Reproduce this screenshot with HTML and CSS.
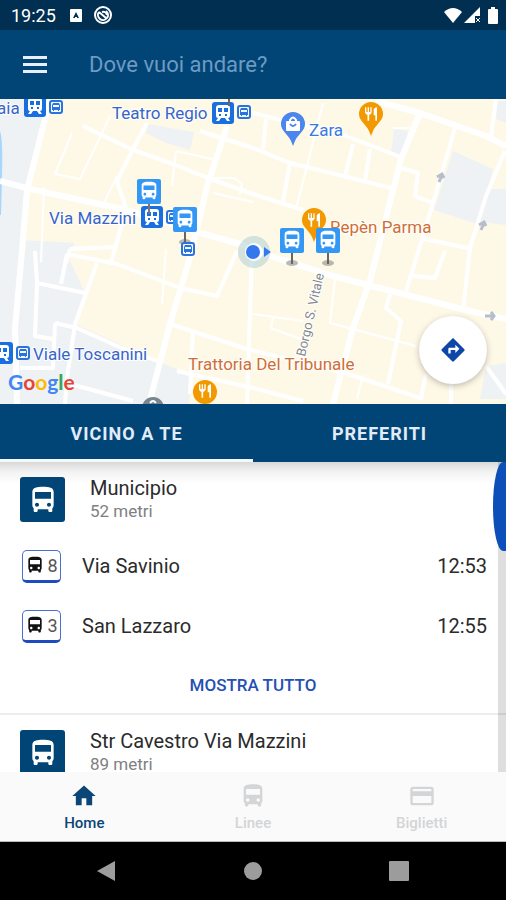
FILE: index.html
```
<!DOCTYPE html>
<html lang="it">
<head>
    <meta charset="UTF-8">
    <meta name="viewport" content="width=device-width, initial-scale=1.0">
    <title>Vicino a te</title>
    <link rel="stylesheet" href="styles.css">
</head>
<body>
    <!-- Shared icons -->
    <svg class="sprite" aria-hidden="true">
        <symbol id="bus" viewBox="0 0 24 24">
            <path fill="currentColor" d="M4 16c0 .88.39 1.67 1 2.22V20c0 .55.45 1 1 1h1c.55 0 1-.45 1-1v-1h8v1c0 .55.45 1 1 1h1c.55 0 1-.45 1-1v-1.78c.61-.55 1-1.34 1-2.22V6c0-3.5-3.58-4-8-4s-8 .5-8 4v10zm3.5 1c-.83 0-1.5-.67-1.5-1.5S6.67 14 7.5 14s1.5.67 1.5 1.5S8.33 17 7.5 17zm9 0c-.83 0-1.5-.67-1.5-1.5s.67-1.5 1.5-1.5 1.5.67 1.5 1.5-.67 1.5-1.5 1.5zm1.5-6H6V6h12v5z"/>
        </symbol>
        <symbol id="fork" viewBox="0 0 24 24">
            <path fill="#fff" d="M11 9H9V2H7v7H5V2H3v7c0 2.12 1.66 3.84 3.75 3.97V22h2.5v-9.03C11.34 12.84 13 11.12 13 9V2h-2v7zm5-3v8h2.5v8H21V2c-2.76 0-5 2.24-5 4z"/>
        </symbol>
        <symbol id="station" viewBox="0 0 24 24">
            <rect x="1" y="1" width="22" height="22" rx="3" fill="#1a6fe0"/>
            <path fill="#fff" fill-rule="evenodd" d="M8 4h8q3 0 3 3v8q0 2-2 2l2 3h-3l-2-3h-4l-2 3H5l2-3q-2 0-2-2V7q0-3 3-3zM7 7v4h4V7zm6 0v4h4V7zM8 13v2h2v-2zm6 0v2h2v-2z"/>
        </symbol>
        <symbol id="halt" viewBox="0 0 14 14">
            <rect x="1" y="1" width="12" height="12" rx="2" fill="#f4f9ff" stroke="#2a73dd" stroke-width="2"/>
            <path fill="#2a73dd" fill-rule="evenodd" d="M4 3h6l1 2v5h-1v1H9v-1H5v1H4v-1H3V5zm0 2v2h6V5z"/>
        </symbol>
        <symbol id="busstop" viewBox="0 0 26 40">
            <ellipse cx="13" cy="35" rx="6" ry="3" fill="#8a8a80" opacity=".6"/>
            <path d="M13 25v11" stroke="#666" stroke-width="2"/>
            <rect x="1" width="24" height="25" rx="2" fill="#3397f5"/>
            <use href="#bus" x="2" y="1" width="22" height="22" color="#fff"/>
        </symbol>
        <symbol id="pin" viewBox="0 0 24 34">
            <path fill="currentColor" d="M12 0a12 12 0 0 0-12 12c0 7 7 10 10 17l2 5 2-5c3-7 10-10 10-17A12 12 0 0 0 12 0z"/>
        </symbol>
    </svg>

    <div class="app">
        <div class="status-bar">
            <span class="clock">19:25</span>
            <svg width="12" height="13" viewBox="0 0 12 13"><rect width="12" height="13" rx="1" fill="#fff"/><path d="M3 9l3-6 3 6H7V8H5v1z" fill="#002f52"/></svg>
            <svg width="18" height="18" viewBox="0 0 18 18" fill="none" stroke="#fff" stroke-width="2"><circle cx="9" cy="9" r="8"/><path d="M5 6a5 5 0 1 0 7-1M5 6l7 6M8 6q4-1 5 3"/></svg>
            <div class="signals">
                <svg width="18" height="15" viewBox="0 0 18 15"><path d="M0 4Q9-4 18 4L9 15z" fill="#fff"/></svg>
                <svg width="16" height="16" viewBox="0 0 16 16"><path d="M0 16L16 0v9h-5v7z" fill="#fff"/><path d="M12 11l4 4m0-4l-4 4" stroke="#fff" stroke-width="1"/></svg>
                <svg class="battery" width="10" height="17" viewBox="0 0 10 17"><path d="M3 0h4v2h2q1 0 1 1v13q0 1-1 1H1q-1 0-1-1V3q0-1 1-1h2z" fill="#fff"/></svg>
            </div>
        </div>

        <header>
            <button class="menu-btn" aria-label="Menu"><span></span><span></span><span></span></button>
            <input type="text" class="search" placeholder="Dove vuoi andare?" aria-label="Dove vuoi andare?">
        </header>

        <div class="map">
            <svg class="map-canvas" viewBox="0 0 506 305">
                <rect width="506" height="305" fill="#fef9e7"/>
                <!-- Built-up areas and water -->
                <g fill="#eff2f4">
                    <path d="M0 0h50L27 91l-5 50 53 3-8 11 18 39-10 31 82 37 34 14-2 29H0z"/>
                    <path d="M148 25l46 8-4 18-24-7-20-10z"/>
                    <path d="M453 52l40 18-7 27-9 28-43-14z"/>
                    <path d="M490 90h16v36l-26-3z"/>
                    <path d="M394 30l14 2-5 27-12-5z"/>
                    <path d="M486 267l20-3v36h-26z"/>
                    <path d="M497 2h9v22l-10-4z"/>
                </g>
                <path d="M0 32q3 8 2 44l-1 40H0z" fill="#a9d5fb"/>

                <g class="roads">
                    <path class="wide" d="M50 0L27 91l-5 61-7 77 2 76"/>
                    <path class="wide" d="M0 82l30 8 97 21 73 23 40 11 30 12 63 20 70 18 67 17 36 8"/>
                    <path d="M83 27l50 24 40 14 35 14 45 16 50 16"/>
                    <path d="M147 24l-14 26-16 32 9 27-11 41-4 13"/>
                    <path class="wide" d="M227 27l-20 60-10 43-9 35-18 60-20 76"/>
                    <path d="M200 32l53 17 37 15 53 13 48 12"/>
                    <path d="M253 14l93 23 57 22"/>
                    <path class="wide" d="M376 2l44 12 66 23 20 10"/>
                    <path class="wide" d="M420 14l-19 46-23 90-8 32-17 47-20 76"/>
                    <path d="M496 0l-5 37"/>
                    <path d="M455 29l-22 75-13 43-14 45"/>
                    <path d="M505 52l-19 45-16 52-7 63"/>
                    <path d="M401 69l17 5-3 23 18 7"/>
                    <path d="M266 20l-3 30m27 14l-7 38m70-57l-8 32m25-27l-5 32"/>
                    <path d="M420 139l52 11m-59 27l22 2 10-27m-55 43l-4 14 15 13-13 63"/>
                    <path d="M170 225l77 25 98 24 78 26"/>
                    <path d="M67 155l50 10 63 24 37 8 20-45m-170 3l-6 30"/>
                    <path d="M35 152l2 32 48 10m12-30L75 225l-8 54-2 26"/>
                    <path d="M37 184l-2 53 18 3m2-16l22 5 40 18 40 15M55 224l-2 45H20"/>
                    <path d="M70 285l63 17m60-70l-3 63m-13-23l76 17 50 13"/>
                    <path d="M252 152l-5 153m204-20v20m-25-30l-5 24m65-32l20 28"/>
                    <path d="M70 150l45-2m-45 2l-4 14"/>
                </g>
                <g class="roads thin">
                    <path d="M110 17L80 80l-25-5 17-41m-28 54l-3 75m62-57l14-29m59-25l36 8m-36-8l-4 35m37-8h25l8 6-2 10"/>
                    <path d="M213 94l40 9m70-99l-27 106M393 29h17m-75 151l-5 44 86 23"/>
                    <path d="M253 215l50 7m-30-5l-2 12 32 12m60 35l-6 24m-195-95l4-55"/>
                </g>

                <!-- One-way arrows -->
                <g fill="none" stroke="#b7bdcc" stroke-width="3">
                    <path d="M439 83l3-7m-5 2l5-3 2 4M481 131l3-7m-5 2l5-3 2 4M485 217h9m-3-4l3 4-3 4"/>
                </g>

                <!-- Street and place names -->
                <g class="labels">
                    <text class="street" transform="translate(305 258) rotate(-77)">Borgo S. Vitale</text>
                    <text class="transit" x="-3" y="15">aia</text>
                    <text class="transit" x="112" y="20">Teatro Regio</text>
                    <text class="transit" x="49" y="125">Via Mazzini</text>
                    <text class="transit" x="33" y="261">Viale Toscanini</text>
                    <text class="shop" x="309" y="37">Zara</text>
                    <text class="food" x="330" y="134">Repèn Parma</text>
                    <text class="food" x="188" y="271">Trattoria Del Tribunale</text>
                </g>

                <use href="#station" x="23" y="-5" width="24" height="24"/>
                <use href="#halt" x="49" y="1" width="14" height="14"/>
                <use href="#station" x="211" y="2" width="24" height="24"/>
                <use href="#halt" x="237" y="6" width="14" height="14"/>
                <use href="#halt" x="166" y="111" width="14" height="14"/>
                <use href="#station" x="-10" y="242" width="24" height="24"/>
                <use href="#halt" x="16" y="247" width="14" height="14"/>
                <path d="M229 0v7" stroke="#666" stroke-width="2"/>

                <use href="#pin" x="281" y="13" width="24" height="34" color="#4a86ee"/>
                <rect x="286" y="22" width="14" height="10" rx="1" fill="#fff"/>
                <path d="M290 23v-2q3-5 6 0v2" fill="none" stroke="#fff" stroke-width="2"/>
                <path d="M290 25q3 4 6 0" fill="none" stroke="#4a86ee" stroke-width="2"/>
                <use href="#pin" x="359" y="3" width="24" height="34" color="#f29900"/>
                <use href="#fork" x="363" y="7" width="16" height="16"/>
                <use href="#pin" x="302" y="109" width="24" height="34" color="#f29900"/>
                <use href="#fork" x="306" y="113" width="16" height="16"/>
                <circle cx="205" cy="293" r="12" fill="#f29900"/>
                <use href="#fork" x="197" y="284" width="16" height="16"/>
                <circle cx="153" cy="309" r="11" fill="#78868e"/>
                <path d="M150 304q3-4 6 0" fill="none" stroke="#fff" stroke-width="2"/>

                <!-- Current position -->
                <circle cx="254" cy="153" r="16" fill="#a9cbd6" opacity=".5"/>
                <circle cx="254" cy="153" r="9" fill="#fff"/>
                <circle cx="253" cy="153" r="7" fill="#3478ee"/>
                <path d="M264 148l7 5-7 5z" fill="#3478ee"/>

                <use href="#busstop" x="136" y="80" width="26" height="40"/>
                <use href="#station" x="140" y="106" width="24" height="24"/>
                <path d="M149 105v10" stroke="#777" stroke-width="2"/>
                <use href="#busstop" x="172" y="108" width="26" height="40"/>
                <use href="#halt" x="181" y="143" width="14" height="14"/>
                <use href="#busstop" x="279" y="129" width="26" height="40"/>
                <use href="#busstop" x="315" y="129" width="26" height="40"/>

                <text class="brand" x="8" y="291"><tspan fill="#4285f4">G</tspan><tspan fill="#ea4335">o</tspan><tspan fill="#fbbc05">o</tspan><tspan fill="#4285f4">g</tspan><tspan fill="#34a853">l</tspan><tspan fill="#ea4335">e</tspan></text>
            </svg>
            <button class="route-btn" aria-label="Indicazioni">
                <svg width="28" height="28" viewBox="0 0 24 24"><path fill="#0d47a8" d="M21.71 11.29l-9-9c-.39-.39-1.02-.39-1.41 0l-9 9c-.39.39-.39 1.02 0 1.41l9 9c.39.39 1.02.39 1.41 0l9-9c.39-.38.39-1.01 0-1.41zM14 14.5V12h-4v3H8v-4c0-.55.45-1 1-1h5V7.5l3.5 3.5-3.5 3.5z"/></svg>
            </button>
        </div>

        <div class="tabs">
            <button class="tab active">VICINO A TE</button>
            <button class="tab">PREFERITI</button>
        </div>

        <main>
            <div class="stops">
                <section class="stop">
                    <div class="stop-head">
                        <div class="stop-icon"><svg width="32" height="32"><use href="#bus"/></svg></div>
                        <div>
                            <h2>Municipio</h2>
                            <p>52 metri</p>
                        </div>
                    </div>
                    <div class="line">
                        <span class="line-badge"><svg width="20" height="20"><use href="#bus"/></svg>8</span>
                        <span class="line-name">Via Savinio</span>
                        <span class="line-time">12:53</span>
                    </div>
                    <div class="line">
                        <span class="line-badge"><svg width="20" height="20"><use href="#bus"/></svg>3</span>
                        <span class="line-name">San Lazzaro</span>
                        <span class="line-time">12:55</span>
                    </div>
                    <button class="show-all">MOSTRA TUTTO</button>
                </section>
                <section class="stop">
                    <div class="stop-head">
                        <div class="stop-icon"><svg width="32" height="32"><use href="#bus"/></svg></div>
                        <div>
                            <h2>Str Cavestro Via Mazzini</h2>
                            <p>89 metri</p>
                        </div>
                    </div>
                </section>
            </div>
            <div class="track"><div class="thumb"></div></div>
        </main>

        <nav class="bottom-nav">
            <a href="#home" class="active">
                <svg width="28" height="28" viewBox="0 0 24 24"><path fill="currentColor" d="M10 20v-6h4v6h5v-8h3L12 3 2 12h3v8z"/></svg>
                Home
            </a>
            <a href="#linee">
                <svg width="28" height="28"><use href="#bus"/></svg>
                Linee
            </a>
            <a href="#biglietti">
                <svg width="28" height="28" viewBox="0 0 24 24"><path fill="currentColor" d="M20 4H4c-1.11 0-1.99.89-1.99 2L2 18c0 1.11.89 2 2 2h16c1.11 0 2-.89 2-2V6c0-1.11-.89-2-2-2zm0 14H4v-6h16v6zm0-10H4V6h16v2z"/></svg>
                Biglietti
            </a>
        </nav>

        <div class="system-nav">
            <button aria-label="Indietro"><svg width="20" height="20" viewBox="0 0 20 20"><path d="M18 0v20L0 10z" fill="#9c9c9c"/></svg></button>
            <button aria-label="Schermata iniziale"><svg width="20" height="20" viewBox="0 0 20 20"><circle cx="10" cy="10" r="9" fill="#9c9c9c"/></svg></button>
            <button aria-label="Recenti"><svg width="20" height="20" viewBox="0 0 20 20"><rect width="20" height="20" rx="1" fill="#9c9c9c"/></svg></button>
        </div>
    </div>
</body>
</html>
```
FILE: styles.css
```
* { margin: 0; padding: 0; box-sizing: border-box; }
body {
    font-family: Roboto, 'Liberation Sans', sans-serif;
    color: #2b2b2b;
    background-color: #fff;
}
button {
    font-family: inherit;
    border: none;
    background: none;
    cursor: pointer;
}
svg { display: block; flex-shrink: 0; }
.sprite { position: absolute; width: 0; height: 0; }
.app {
    display: flex;
    flex-direction: column;
    height: 100vh;
}

/* Status bar */
.status-bar {
    display: flex;
    align-items: center;
    gap: 12px;
    height: 30px;
    padding: 0 8px 0 11px;
    background-color: #002f52;
    color: #fff;
    flex-shrink: 0;
}
.clock {
    font-size: 18px;
    margin-right: 2px;
}
.signals {
    display: flex;
    align-items: center;
    gap: 2px;
    margin-left: auto;
}
.battery { margin-left: 6px; }

/* Search header */
header {
    display: flex;
    align-items: center;
    gap: 39px;
    height: 69px;
    padding: 0 20px;
    background-color: #004576;
    flex-shrink: 0;
}
.menu-btn {
    display: flex;
    flex-direction: column;
    gap: 4px;
    padding: 4px 3px;
}
.menu-btn span {
    width: 24px;
    height: 3px;
    background-color: #e6effa;
}
.search {
    flex: 1;
    min-width: 0;
    border: none;
    outline: none;
    background: none;
    color: #fff;
    font-family: inherit;
    font-size: 22px;
}
.search::placeholder { color: #6d9bc3; }

/* Map */
.map {
    position: relative;
    flex-shrink: 0;
}
.map-canvas { width: 100%; height: auto; }
.roads path {
    fill: none;
    stroke: #fff;
    stroke-width: 4px;
    stroke-linejoin: round;
}
.roads .wide { stroke-width: 6px; }
.thin path { stroke-width: 2px; }
.labels text {
    font-size: 17px;
    stroke: #fff;
    stroke-width: 2px;
    paint-order: stroke;
}
.labels .transit { fill: #3765c8; }
.labels .shop { fill: #3b7be0; }
.labels .food { fill: #cf6e36; }
.labels .street { fill: #84888c; font-size: 13px; }
.brand {
    font-family: Lato, sans-serif;
    font-size: 21px;
    font-weight: bold;
}
.route-btn {
    position: absolute;
    right: 19px;
    bottom: 20px;
    display: flex;
    align-items: center;
    justify-content: center;
    width: 68px;
    height: 68px;
    border-radius: 50%;
    background-color: #fff;
    box-shadow: 0 2px 6px rgba(0, 0, 0, 0.25);
}

/* Tabs */
.tabs {
    display: flex;
    flex-shrink: 0;
    background-color: #004576;
}
.tab {
    flex: 1;
    height: 58px;
    border-bottom: 3px solid transparent;
    border-top: 3px solid transparent;
    color: #e2ecf8;
    font-size: 18px;
    font-weight: 700;
    letter-spacing: 1px;
}
.tab.active { border-bottom-color: #f5f8fc; }

/* Stops list */
main {
    position: relative;
    flex: 1;
    min-height: 0;
    background: linear-gradient(#d8d8d8, #f3f3f3 10px, #fff 22px);
}
.stops {
    height: 100%;
    overflow: hidden;
}
.stop { border-bottom: 2px solid #ececec; }
.stop-head {
    display: flex;
    gap: 25px;
    padding: 15px 20px 14px;
}
.stop-icon {
    display: flex;
    align-items: center;
    justify-content: center;
    width: 45px;
    height: 45px;
    border-radius: 3px;
    background-color: #004576;
    color: #fff;
}
.stop-head h2 {
    font-size: 20px;
    font-weight: 400;
    line-height: 23px;
}
.stop-head p {
    font-size: 17px;
    line-height: 22px;
    color: #808080;
}
.line {
    display: flex;
    align-items: center;
    height: 60px;
    padding: 0 19px 0 22px;
    font-size: 20px;
}
.line-badge {
    display: flex;
    align-items: center;
    justify-content: center;
    gap: 2px;
    width: 39px;
    height: 33px;
    border: 1px solid #4a6fd0;
    border-bottom: 3px solid #1f4bc0;
    border-radius: 5px;
    font-size: 18px;
    color: #555;
}
.line-badge svg { color: #111; }
.line-name { margin-left: 21px; }
.line-time { margin-left: auto; }
.show-all {
    display: block;
    width: 100%;
    height: 57px;
    color: #2450b4;
    font-size: 17px;
    font-weight: 500;
}
.track {
    position: absolute;
    top: 0;
    right: 0;
    width: 8px;
    height: 100%;
    background-color: rgba(0, 0, 0, 0.13);
}
.thumb {
    position: absolute;
    right: 0;
    width: 13px;
    height: 89px;
    border-radius: 10px 0 0 10px / 44px 0 0 44px;
    background-color: #0d4fb8;
}

/* Bottom navigation */
.bottom-nav {
    display: flex;
    flex-shrink: 0;
    height: 70px;
    background-color: #fafafa;
    border-bottom: 1px solid #bbb;
}
.bottom-nav a {
    flex: 1;
    display: flex;
    flex-direction: column;
    align-items: center;
    justify-content: center;
    gap: 4px;
    color: #d3d5d6;
    font-size: 15px;
    font-weight: 500;
    text-decoration: none;
}
.bottom-nav a.active { color: #0b4677; }
.system-nav {
    display: flex;
    align-items: center;
    justify-content: center;
    gap: 126px;
    height: 58px;
    flex-shrink: 0;
    background-color: #000;
}
```
